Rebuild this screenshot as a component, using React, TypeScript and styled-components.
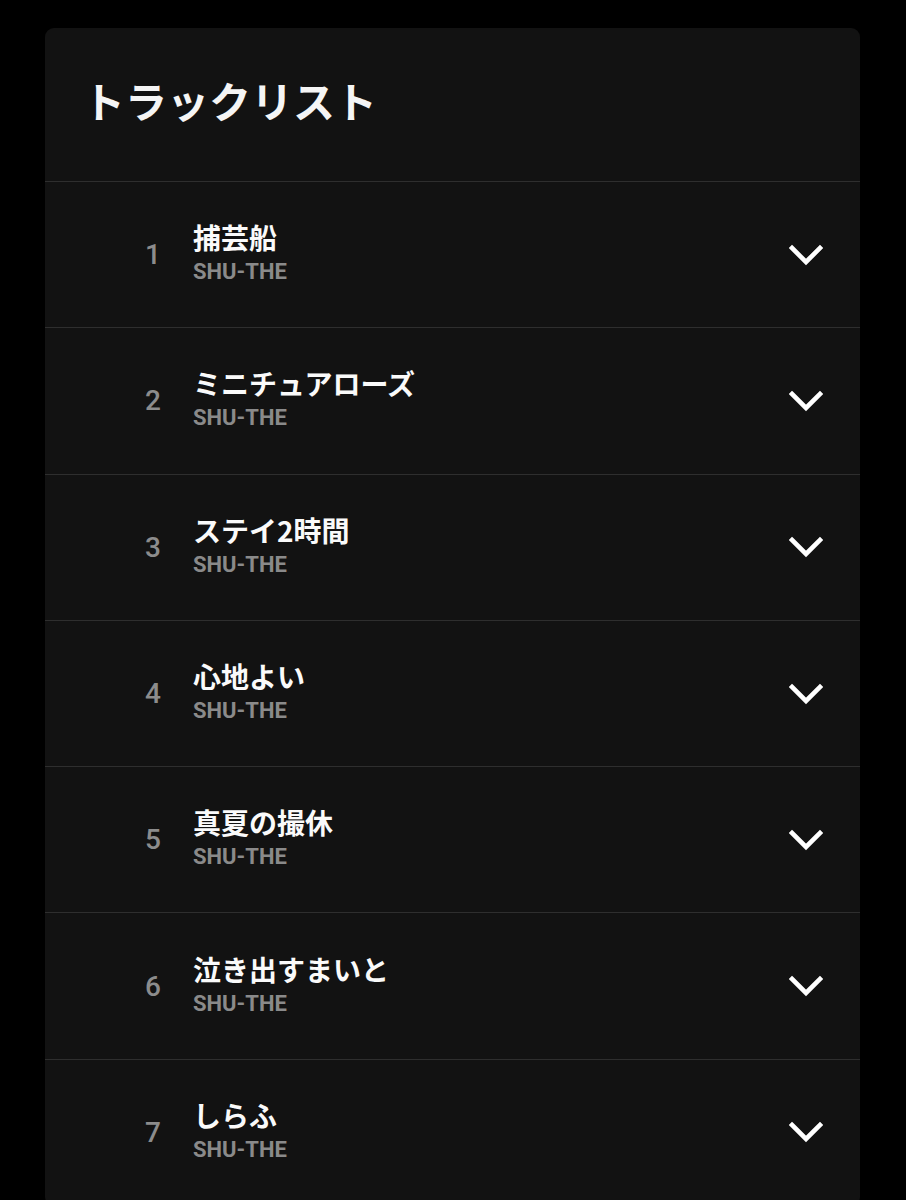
import React from 'react';
import styled, { createGlobalStyle } from 'styled-components';

const GlobalStyle = createGlobalStyle`
  html, body {
    margin: 0;
    padding: 0;
    background: #000;
  }
  body {
    font-family: Roboto, "Noto Sans CJK JP", sans-serif;
    color: #fff;
  }
`;

const Page = styled.div`
  padding: 28px 46px 0 45px;
  min-height: 1200px;
  box-sizing: border-box;
`;

const Card = styled.section`
  background: #121212;
  border-radius: 9px;
  overflow: hidden;
`;

const Header = styled.h1`
  margin: 0;
  height: 154px;
  box-sizing: border-box;
  padding: 51px 0 0 38px;
  font-family: "Noto Sans CJK JP", sans-serif;
  font-size: 42px;
  font-weight: 700;
  line-height: 1;
  color: #f5f5f5;
  border-bottom: 1px solid #2e2e2e;
`;

const Row = styled.div`
  display: flex;
  align-items: center;
  height: 146.3px;
  box-sizing: border-box;
  padding: 0 37px 0 88px;
  border-bottom: 1px solid #2e2e2e;
`;

const Num = styled.span`
  width: 40px;
  text-align: center;
  font-family: Roboto, sans-serif;
  font-weight: 500;
  font-size: 28px;
  color: #8c8c8c;
`;

const Info = styled.div`
  flex: 1;
  margin-left: 20px;
  display: flex;
  flex-direction: column;
  gap: 7px;
`;

const Title = styled.div`
  font-family: "Noto Sans CJK JP", sans-serif;
  font-weight: 700;
  font-size: 28px;
  line-height: 28px;
  color: #fafafa;
`;

const Artist = styled.div`
  font-family: Roboto, sans-serif;
  font-weight: 700;
  font-size: 22px;
  line-height: 28px;
  color: #8a8a8a;
`;

const Chevron = () => (
  <svg width="34" height="22" viewBox="0 0 34 22">
    <polyline
      points="3,4 17,18 31,4"
      fill="none"
      stroke="#fff"
      strokeWidth="4.6"
      strokeLinecap="square"
    />
  </svg>
);

const tracks = [
  '捕芸船',
  'ミニチュアローズ',
  'ステイ2時間',
  '心地よい',
  '真夏の撮休',
  '泣き出すまいと',
  'しらふ',
];

export default function App() {
  return (
    <>
      <GlobalStyle />
      <Page>
        <Card>
          <Header>トラックリスト</Header>
          {tracks.map((t, i) => (
            <Row key={t}>
              <Num>{i + 1}</Num>
              <Info>
                <Title>{t}</Title>
                <Artist>SHU-THE</Artist>
              </Info>
              <Chevron />
            </Row>
          ))}
        </Card>
      </Page>
    </>
  );
}
